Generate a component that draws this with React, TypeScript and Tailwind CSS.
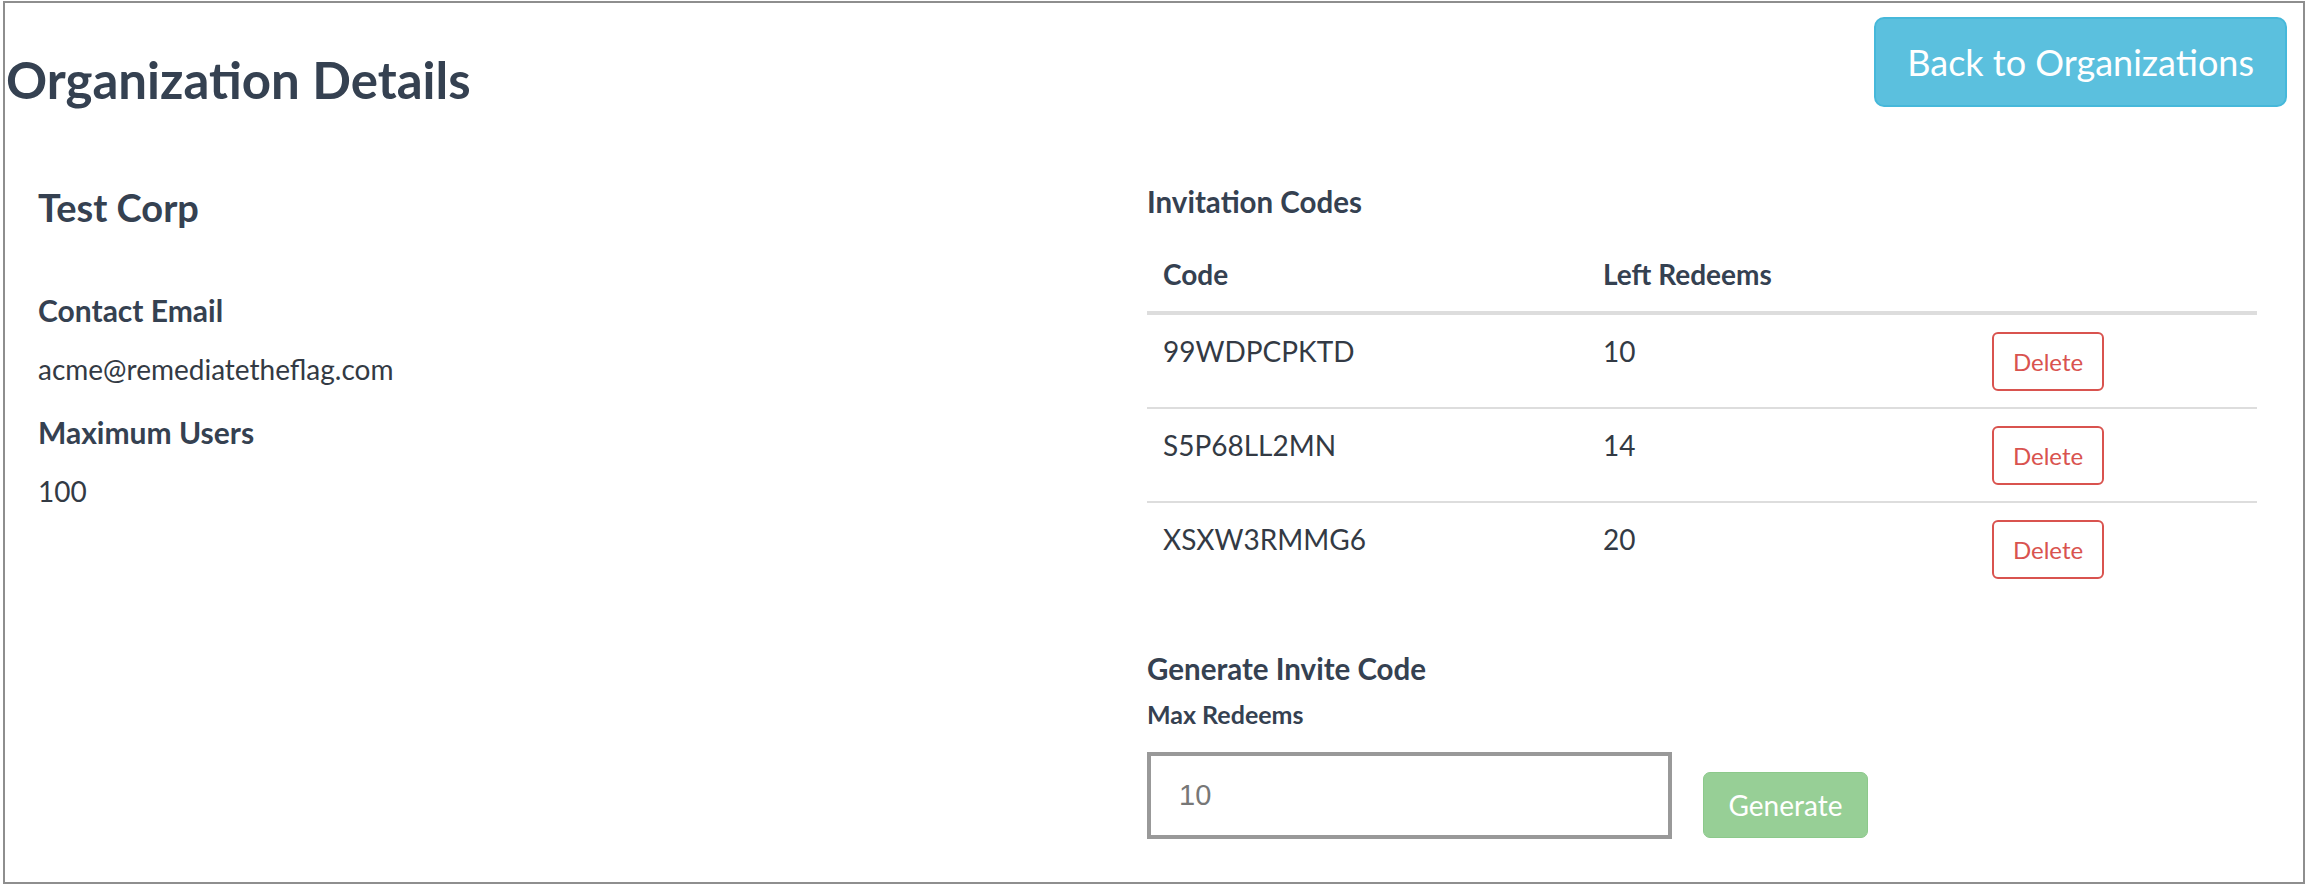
import React from 'react'

const codes = [
  { code: '99WDPCPKTD', left: 10 },
  { code: 'S5P68LL2MN', left: 14 },
  { code: 'XSXW3RMMG6', left: 20 },
]

export default function App() {
  return (
    <div className="bg-white pl-[3px] pt-[1px] font-['Lato',sans-serif] text-[#333a44]">
      <div className="flex h-[883px] w-[2302px] flex-col border-2 border-[#8e8e8e]">
        {/* Header */}
        <div className="flex items-start justify-between">
          <h1 className="mt-[51px] pl-[1px] text-[51px] font-bold leading-[51px] text-[#354151]">
            Organization Details
          </h1>
          <button className="mr-[16px] mt-[14px] flex h-[90px] items-center rounded-[10px] border-2 border-[#46b8da] bg-[#5bc0de] px-[31px] text-[36px] text-white">
            Back to Organizations
          </button>
        </div>

        {/* Body */}
        <div className="flex items-start pl-[33px]">
          {/* Organization info */}
          <div className="flex w-[1109px] flex-col">
            <h3 className="mt-[81px] text-[38px] font-bold leading-[38px] text-[#354151]">Test Corp</h3>
            <h4 className="mt-[69px] text-[30px] font-bold leading-[30px] text-[#354151]">Contact Email</h4>
            <p className="mt-[30px] text-[28px] leading-[28px]">acme@remediatetheflag.com</p>
            <h4 className="mt-[34px] text-[30px] font-bold leading-[30px] text-[#354151]">Maximum Users</h4>
            <p className="mt-[30px] text-[28px] leading-[28px]">100</p>
          </div>

          {/* Invitation codes */}
          <div className="flex w-[1110px] flex-col">
            <h4 className="mt-[80px] text-[29.5px] font-bold leading-[29px] text-[#354151]">Invitation Codes</h4>
            <table className="mt-[22px] w-full border-collapse text-left">
              <thead>
                <tr className="border-b-4 border-[#dddddd]">
                  <th className="w-[440px] px-[16px] pb-[17px] pt-[16px] text-[28px] font-bold leading-[40px] text-[#354151]">Code</th>
                  <th className="w-[389px] px-[16px] pb-[17px] pt-[16px] text-[28px] font-bold leading-[40px] text-[#354151]">Left Redeems</th>
                  <th className="px-[16px] pb-[17px] pt-[16px]"></th>
                </tr>
              </thead>
              <tbody>
                {codes.map((c, i) => (
                  <tr key={c.code} className={i > 0 ? 'border-t-2 border-[#dddddd]' : ''}>
                    <td className="px-[16px] pb-[16px] pt-[17px] align-top text-[28px] leading-[38px]">{c.code}</td>
                    <td className="px-[16px] pb-[16px] pt-[17px] align-top text-[28px] leading-[38px]">{c.left}</td>
                    <td className="px-[16px] pb-[16px] pt-[17px] align-top">
                      <button className="flex h-[59px] w-[112px] items-center justify-center rounded-[6px] border-2 border-[#d9534f] bg-white text-[24px] text-[#d9534f]">
                        Delete
                      </button>
                    </td>
                  </tr>
                ))}
              </tbody>
            </table>

            <h4 className="mt-[59px] text-[29.5px] font-bold leading-[29px] text-[#354151]">Generate Invite Code</h4>
            <label className="mt-[19px] text-[25px] font-bold leading-[25px] text-[#354151]">Max Redeems</label>
            <div className="mt-[25px] flex items-end">
              <input
                defaultValue="10"
                className="h-[87px] w-[525px] border-4 border-[#999999] px-[28px] font-['Liberation_Sans',sans-serif] text-[29px] text-[#777777] outline-none"
              />
              <button className="mb-[1px] ml-[31px] flex h-[66px] w-[165px] items-center justify-center rounded-[7px] border border-[#8cc98b] bg-[#97cf96] text-[28px] text-white">
                Generate
              </button>
            </div>
          </div>
        </div>
      </div>
    </div>
  )
}
